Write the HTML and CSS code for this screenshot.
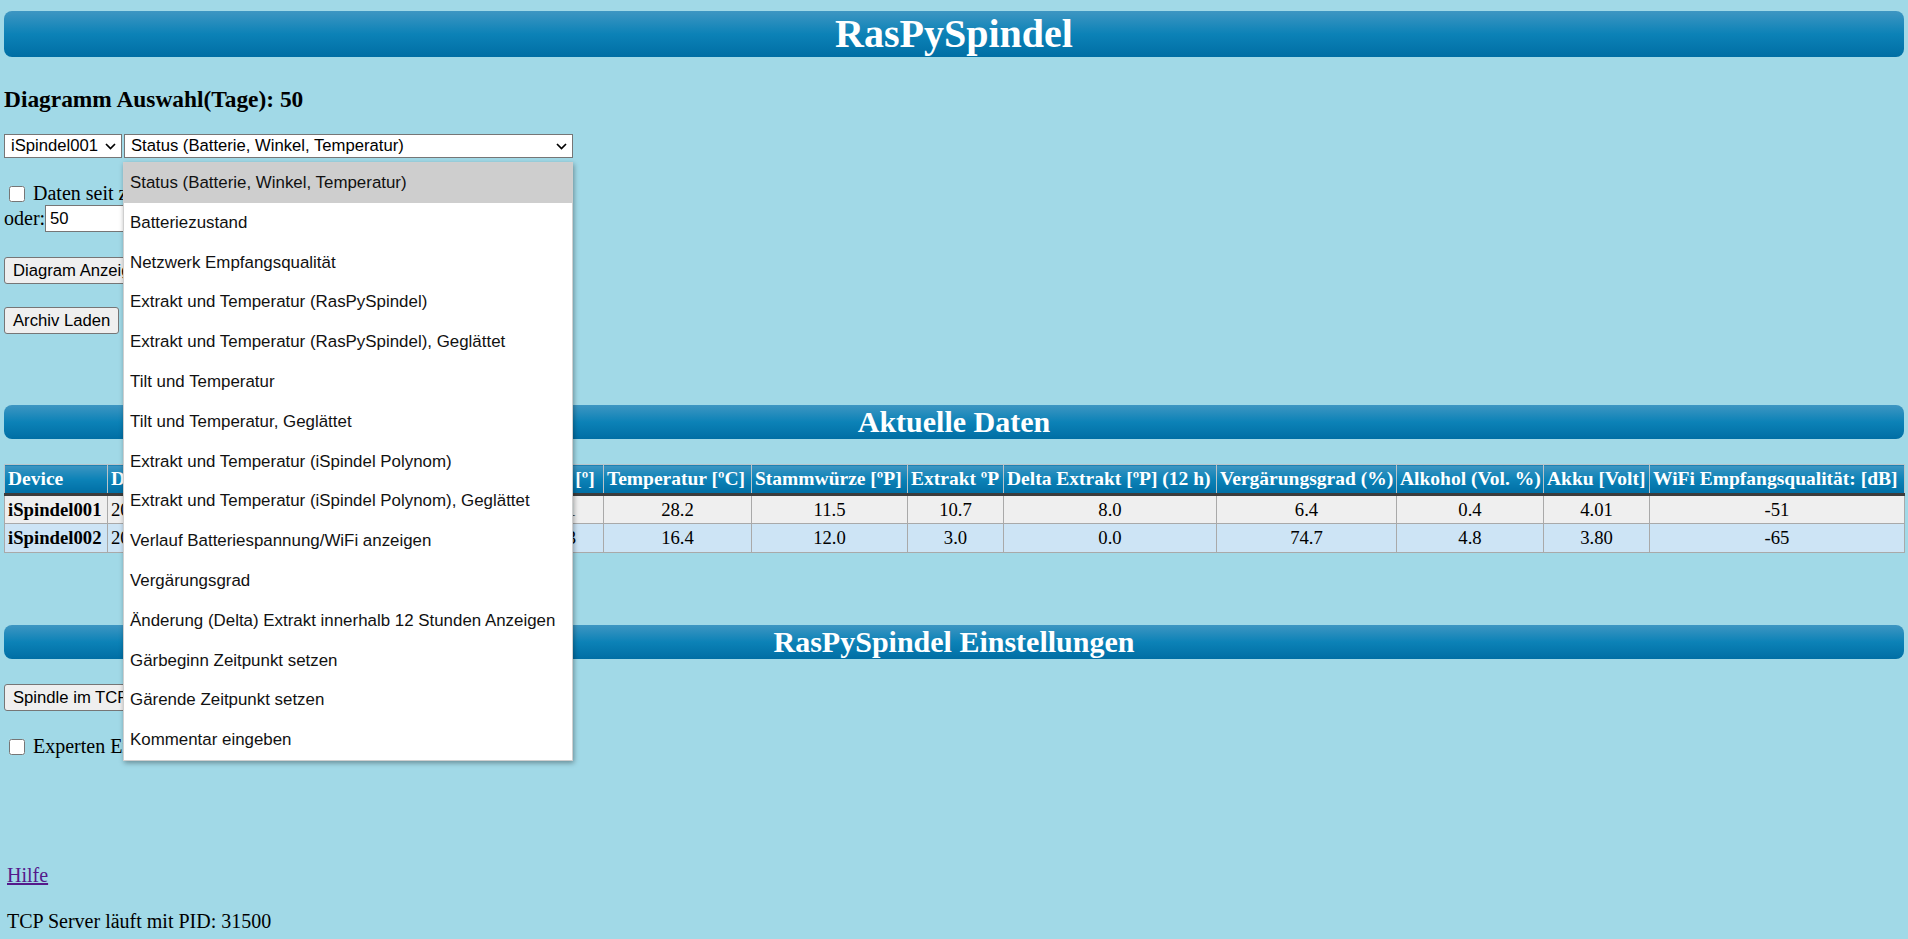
FILE: index.html
```html
<!DOCTYPE html>
<html lang="de">
<head>
<meta charset="utf-8">
<title>RasPySpindel</title>
<link rel="stylesheet" href="styles.css">
</head>
<body>
<h1 class="bar bar-main">RasPySpindel</h1>

<h3 class="title">Diagramm Auswahl(Tage): 50</h3>

<div class="select-row">
  <div class="select sel-device">
    <span class="sel-text">iSpindel001</span>
    <svg class="chev" width="11" height="7" viewBox="0 0 11 7"><path d="M1 1 L5.5 5.5 L10 1" fill="none" stroke="#000" stroke-width="1.7"/></svg>
  </div>
  <div class="select-wrap">
    <div class="select sel-chart">
      <span class="sel-text">Status (Batterie, Winkel, Temperatur)</span>
      <svg class="chev" width="11" height="7" viewBox="0 0 11 7"><path d="M1 1 L5.5 5.5 L10 1" fill="none" stroke="#000" stroke-width="1.7"/></svg>
    </div>
    <ul class="dropdown">
      <li class="opt opt-active">Status (Batterie, Winkel, Temperatur)</li>
      <li class="opt">Batteriezustand</li>
      <li class="opt">Netzwerk Empfangsqualität</li>
      <li class="opt">Extrakt und Temperatur (RasPySpindel)</li>
      <li class="opt">Extrakt und Temperatur (RasPySpindel), Geglättet</li>
      <li class="opt">Tilt und Temperatur</li>
      <li class="opt">Tilt und Temperatur, Geglättet</li>
      <li class="opt">Extrakt und Temperatur (iSpindel Polynom)</li>
      <li class="opt">Extrakt und Temperatur (iSpindel Polynom), Geglättet</li>
      <li class="opt">Verlauf Batteriespannung/WiFi anzeigen</li>
      <li class="opt">Vergärungsgrad</li>
      <li class="opt">Änderung (Delta) Extrakt innerhalb 12 Stunden Anzeigen</li>
      <li class="opt">Gärbeginn Zeitpunkt setzen</li>
      <li class="opt">Gärende Zeitpunkt setzen</li>
      <li class="opt">Kommentar eingeben</li>
    </ul>
  </div>
</div>

<label class="check-row check-first"><input type="checkbox" class="cb"><span>Daten seit zurückgesetztem Gärbeginn</span></label>
<div class="days-row"><span>oder:</span><input class="days" type="text" value="50"><span class="days-unit">Tage</span></div>

<div class="btn-row btn-first"><button class="btn">Diagram Anzeigen</button></div>
<div class="btn-row btn-second"><button class="btn">Archiv Laden</button></div>

<h2 class="bar bar-sub">Aktuelle Daten</h2>

<table class="data">
  <colgroup>
    <col class="c-device"><col class="c-datum"><col class="c-beginn"><col class="c-winkel">
    <col class="c-temp"><col class="c-stamm"><col class="c-extr"><col class="c-delta">
    <col class="c-verg"><col class="c-alk"><col class="c-akku"><col class="c-wifi">
  </colgroup>
  <thead>
    <tr>
      <th>Device</th><th>Datum</th><th>Gärbeginn</th><th>Winkel [º]</th>
      <th>Temperatur [ºC]</th><th>Stammwürze [ºP]</th><th>Extrakt ºP</th><th>Delta Extrakt [ºP] (12 h)</th>
      <th>Vergärungsgrad (%)</th><th>Alkohol (Vol. %)</th><th>Akku [Volt]</th><th>WiFi Empfangsqualität: [dB]</th>
    </tr>
  </thead>
  <tbody>
    <tr class="row-a">
      <td class="dev">iSpindel001</td><td class="date">2024-03-12 18:42:07</td><td class="date">2024-03-10 09:15:00</td><td>25.71</td>
      <td>28.2</td><td>11.5</td><td>10.7</td><td>8.0</td><td>6.4</td><td>0.4</td><td>4.01</td><td>-51</td>
    </tr>
    <tr class="row-b">
      <td class="dev">iSpindel002</td><td class="date">2024-03-12 18:40:53</td><td class="date">2024-02-20 17:30:00</td><td>26.43</td>
      <td>16.4</td><td>12.0</td><td>3.0</td><td>0.0</td><td>74.7</td><td>4.8</td><td>3.80</td><td>-65</td>
    </tr>
  </tbody>
</table>

<h2 class="bar bar-sub bar-settings">RasPySpindel Einstellungen</h2>

<div class="btn-row btn-first"><button class="btn">Spindle im TCP Server umbenennen</button></div>
<label class="check-row check-expert"><input type="checkbox" class="cb"><span>Experten Einstellungen</span></label>

<div class="footer">
  <a class="help" href="#hilfe">Hilfe</a>
  <p class="pid">TCP Server läuft mit PID: 31500</p>
</div>
</body>
</html>
```

FILE: styles.css
```css
* { box-sizing: border-box; }

html, body { margin: 0; }

body {
  background: #a1d9e7;
  font-family: "Liberation Serif", "Times New Roman", serif;
  font-size: 20px;
  color: #000;
  padding: 11px 4px 0;
  min-height: 939px;
}

.bar {
  margin: 0;
  color: #fff;
  text-align: center;
  font-weight: bold;
  border-radius: 8px;
  background: linear-gradient(to bottom, #3e96c2 0%, #0c82b7 50%, #006ea4 100%);
}

.bar-main {
  font-size: 40px;
  line-height: 46px;
}

.bar-sub {
  font-size: 30px;
  line-height: 34px;
  margin-top: 71px;
}

.bar-settings { margin-top: 72px; }

.title {
  font-size: 23.4px;
  line-height: 27px;
  font-weight: bold;
  margin: 29px 0 0;
}

.select-row {
  display: flex;
  align-items: flex-start;
  gap: 2px;
  margin-top: 21px;
}

.select-wrap {
  position: relative;
}

.select {
  display: flex;
  align-items: center;
  justify-content: space-between;
  height: 24px;
  border: 1px solid #767676;
  background: #fff;
  font-family: "Liberation Sans", Arial, sans-serif;
  font-size: 16.67px;
  color: #000;
  padding: 0 5px 0 6px;
}

.sel-device { width: 118px; }
.sel-chart { width: 449px; }

.sel-text { white-space: nowrap; }

.chev { flex: none; margin-top: 1px; }

.dropdown {
  position: absolute;
  left: -1px;
  top: calc(100% + 4px);
  width: 450px;
  margin: 0;
  padding: 0;
  list-style: none;
  background: #fff;
  border: 1px solid #cfcfcf;
  box-shadow: 1px 2px 5px rgba(0, 0, 0, 0.35);
  z-index: 10;
}

.opt {
  height: 39.8px;
  line-height: 39.8px;
  padding-left: 6px;
  font-family: "Liberation Sans", Arial, sans-serif;
  font-size: 16.9px;
  color: #111;
  white-space: nowrap;
}

.opt-active { background: #cecece; }

.check-row {
  display: flex;
  align-items: center;
  height: 23px;
}

.check-first { margin-top: 24px; }
.check-expert { margin-top: 24px; }

.cb {
  width: 16px;
  height: 16px;
  margin: 1px 8px 0 5px;
  flex: none;
}

.days-row {
  display: flex;
  align-items: center;
  height: 27px;
}

.days {
  width: 190px;
  height: 27px;
  border: 1px solid #767676;
  background: #fff;
  font-family: "Liberation Sans", Arial, sans-serif;
  font-size: 16.67px;
  padding: 1px 4px;
  margin: 0;
  color: #000;
}

.days-unit { margin-left: 5px; }

.btn-row { display: flex; }
.btn-first { margin-top: 25px; }
.btn-second { margin-top: 23px; }

.btn {
  height: 27px;
  font-family: "Liberation Sans", Arial, sans-serif;
  font-size: 16.67px;
  color: #000;
  background: #efefef;
  border: 1px solid #767676;
  border-radius: 3px;
  padding: 0 8px;
  margin: 0;
}

.data {
  width: 100%;
  table-layout: fixed;
  border-collapse: collapse;
  margin-top: 25px;
  font-size: 18.7px;
}

.c-device { width: 103px; }
.c-datum { width: 183px; }
.c-beginn { width: 216px; }
.c-winkel { width: 97px; }
.c-temp { width: 148px; }
.c-stamm { width: 156px; }
.c-extr { width: 96px; }
.c-delta { width: 213px; }
.c-verg { width: 180px; }
.c-alk { width: 147px; }
.c-akku { width: 106px; }
.c-wifi { width: 255px; }

.data th {
  color: #fff;
  font-weight: bold;
  font-size: 19.5px;
  text-align: left;
  white-space: nowrap;
  overflow: hidden;
  height: 30px;
  padding: 0 3px;
  border: 1px solid #b9c4c9;
  border-bottom: 3px solid #3c3c3c;
  background: linear-gradient(to bottom, #3e96c2 0%, #0c82b7 50%, #006ea4 100%);
}

.data td {
  height: 29px;
  padding: 0 3px;
  text-align: center;
  border: 1px solid #a9a9a9;
  white-space: nowrap;
  overflow: hidden;
}

.data td.dev {
  font-weight: bold;
  text-align: left;
}

.data td.date { text-align: left; }

.row-a td { background: #efefef; }
.row-b td { background: #cde4f5; }

.footer {
  margin-top: 106px;
  padding-left: 3px;
}

.help {
  display: block;
  line-height: 23px;
  color: #551a8b;
}

.pid {
  margin: 23px 0 0;
  line-height: 23px;
}
```
